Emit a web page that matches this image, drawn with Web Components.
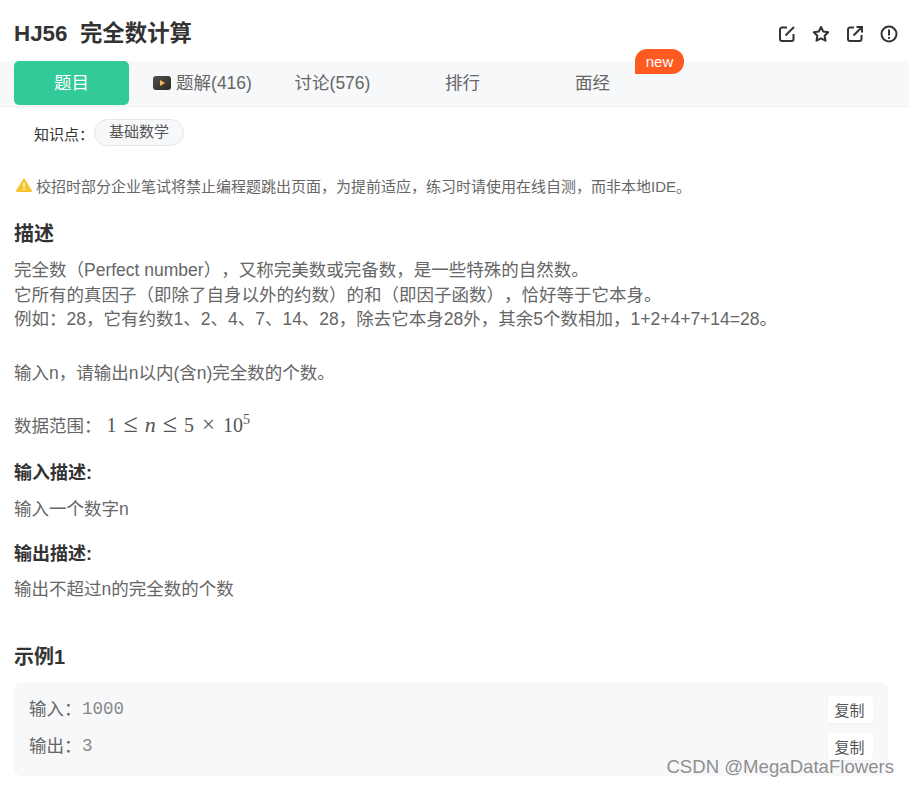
<!DOCTYPE html>
<html lang="zh">
<head>
<meta charset="utf-8">
<title>HJ56 完全数计算</title>
<style>
    html, body { margin: 0; padding: 0; background: #fff; }
    body { font-family: "Liberation Sans", "Noto Sans CJK SC", sans-serif; color: #333; position: relative; height: 787px; overflow: hidden; }
    .wide { text-spacing-trim: space-all; }
</style>
</head>
<body>
<problem-header>HJ56&nbsp;&nbsp;完全数计算</problem-header>
<tab-bar>
    <tab-item active>题目</tab-item>
    <tab-item video>题解(416)</tab-item>
    <tab-item>讨论(576)</tab-item>
    <tab-item>排行</tab-item>
    <tab-item badge="new">面经</tab-item>
</tab-bar>
<topic-row label="知识点：">基础数学</topic-row>
<notice-line>校招时部分企业笔试将禁止编程题跳出页面，为提前适应，练习时请使用在线自测，而非本地IDE。</notice-line>
<desc-section heading="描述" size="20" top="26" gap="12">
    <div>完全数（Perfect number<span class="wide">），</span>又称完美数或完备数，是一些特殊的自然数。</div>
    <div>它所有的真因子（即除了自身以外的约数）的和（即因子函数<span class="wide">），</span>恰好等于它本身。</div>
    <div>例如：28，它有约数1、2、4、7、14、28，除去它本身28外，其余5个数相加，1+2+4+7+14=28。</div>
    <div class="blank">&nbsp;</div>
    <div>输入n，请输出n以内(含n)完全数的个数。</div>
    <div class="blank">&nbsp;</div>
    <div class="range">数据范围： <math-range></math-range></div>
</desc-section>
<desc-section heading="输入描述:" size="18" top="25" gap="12">
    <div>输入一个数字n</div>
</desc-section>
<desc-section heading="输出描述:" size="18" top="20" gap="11">
    <div>输出不超过n的完全数的个数</div>
</desc-section>
<example-box heading="示例1" input="1000" output="3"></example-box>
<water-mark>CSDN @MegaDataFlowers</water-mark>

<script>
class ProblemHeader extends HTMLElement {
    constructor(){
        super();
        this.attachShadow({mode:'open'});
        this.shadowRoot.innerHTML = `
            <style>
                :host{
                    display: flex;
                    align-items: center;
                    justify-content: space-between;
                    height: 61px;
                    padding: 6px 10px 0 14px;
                    box-sizing: border-box;
                }
                h1{
                    margin: 0;
                    font-size: 22.400px;
                    line-height: 30px;
                    font-weight: 700;
                    color: #333;
                }
                .icons{
                    display: flex;
                    gap: 14px;
                }
                svg{
                    display: block;
                    width: 20px;
                    height: 20px;
                    fill: none;
                    stroke: #333;
                    stroke-width: 2;
                }
            </style>
            <h1><slot></slot></h1>
            <div class="icons">
                <svg viewBox="0 0 20 20"><path d="M10 3.500H5a2 2 0 0 0-2 2V15a2 2 0 0 0 2 2h9.500a2 2 0 0 0 2-2V10"/><path d="M8.500 11.500L17 3"/></svg>
                <svg viewBox="0 0 20 20"><path stroke-linejoin="round" d="M10 3l2.200 4.500 5 .7-3.600 3.500.9 5L10 14.300 5.500 16.700l.9-5L2.800 8.200l5-.7z"/></svg>
                <svg viewBox="0 0 20 20"><path d="M9 3.500H5a2 2 0 0 0-2 2V15a2 2 0 0 0 2 2h9.500a2 2 0 0 0 2-2v-4"/><path d="M8.500 11.500L16.500 3.500M11.500 3H17v5.500"/></svg>
                <svg viewBox="0 0 20 20"><circle cx="10" cy="10" r="7.500"/><path d="M10 5.500v6M10 13v1.800"/></svg>
            </div>
        `;
    }
}

class TabBar extends HTMLElement {
    constructor(){
        super();
        this.attachShadow({mode:'open'});
        this.shadowRoot.innerHTML = `
            <style>
                :host{
                    display: flex;
                    gap: 15px;
                    height: 45px;
                    padding-left: 14px;
                    background: #f7f8fa;
                    border-bottom: 1px solid #f0f1f3;
                }
            </style>
            <slot></slot>
        `;
    }
}

class TabItem extends HTMLElement {
    constructor(){
        super();
        this.attachShadow({mode:'open'});
    }

    connectedCallback(){
        let video = this.hasAttribute('video') ? `
            <svg viewBox="0 0 18 14">
                <defs><linearGradient id="g" x1="0" y1="0" x2="1" y2="1"><stop offset="0" stop-color="#55504b"/><stop offset="1" stop-color="#2b2722"/></linearGradient></defs>
                <rect width="18" height="14" rx="3" fill="url(#g)"/>
                <path d="M7 4l5 3-5 3z" fill="#f0b95c"/>
            </svg>
        ` : '';
        let badge = this.getAttribute('badge');
        this.shadowRoot.innerHTML = `
            <style>
                :host{
                    display: flex;
                    align-items: center;
                    justify-content: center;
                    gap: 5px;
                    position: relative;
                    box-sizing: border-box;
                    width: 115px;
                    height: 44px;
                    padding: 0 0 3px 2px;
                    font-size: 17.500px;
                    color: #666;
                    border-radius: 5px;
                }
                :host([active]){
                    padding-left: 0;
                    background: #32ca99;
                    color: #fff;
                }
                svg{
                    width: 18px;
                    height: 14px;
                    flex: none;
                    margin-top: 3px;
                }
                .badge{
                    position: absolute;
                    left: 101px;
                    top: -12px;
                    width: 49px;
                    height: 25px;
                    line-height: 25px;
                    text-align: center;
                    font-size: 15px;
                    color: #fff;
                    background: #ff5a1f;
                    border-radius: 12px 12px 12px 0;
                }
            </style>
            ${video}<slot></slot>
            ${badge ? `<span class="badge">${badge}</span>` : ''}
        `;
    }
}

class TopicRow extends HTMLElement {
    constructor(){
        super();
        this.attachShadow({mode:'open'});
    }

    connectedCallback(){
        this.shadowRoot.innerHTML = `
            <style>
                :host{
                    display: flex;
                    align-items: center;
                    height: 28px;
                    margin-top: 11px;
                    padding-left: 34px;
                    font-size: 15px;
                    color: #333;
                }
                .label{
                    width: 60px;
                    position: relative;
                    top: 1px;
                    white-space: nowrap;
                }
                .chip{
                    box-sizing: border-box;
                    width: 90px;
                    height: 27px;
                    line-height: 23px;
                    text-align: center;
                    color: #555;
                    background: #f7f8fa;
                    border: 1px solid #e6e6e8;
                    border-radius: 14px;
                }
            </style>
            <span class="label">${this.getAttribute('label')}</span>
            <span class="chip"><slot></slot></span>
        `;
    }
}

class NoticeLine extends HTMLElement {
    constructor(){
        super();
        this.attachShadow({mode:'open'});
        this.shadowRoot.innerHTML = `
            <style>
                :host{
                    display: flex;
                    align-items: center;
                    gap: 4px;
                    height: 22px;
                    margin-top: 28px;
                    padding-left: 16px;
                    font-size: 15px;
                    color: #666;
                    white-space: nowrap;
                }
                svg{
                    width: 16px;
                    height: 14px;
                    flex: none;
                }
            </style>
            <svg viewBox="0 0 16 14"><path d="M8 .5a1 1 0 0 1 .9.500l7 11.500a1 1 0 0 1-.9 1.500H1a1 1 0 0 1-.9-1.500L7.100 1A1 1 0 0 1 8 .5z" fill="#f5c431"/><path d="M8 4.500v4.500M8 10.300v1.500" stroke="#fff" stroke-width="1.500"/></svg>
            <slot></slot>
        `;
    }
}

class MathRange extends HTMLElement {
    constructor(){
        super();
        this.attachShadow({mode:'open'});
        this.shadowRoot.innerHTML = `
            <style>
                :host{
                    display: inline-flex;
                    align-items: baseline;
                    gap: 7px;
                    font-family: "Liberation Serif", serif;
                    font-size: 20px;
                    color: #555;
                }
                i{ font-style: italic; font-size: 22px; }
                .op{ font-size: 26px; line-height: 0; }
                .times{ font-size: 23px; line-height: 0; margin: 0 1px; }
                sup{
                    font-size: 14px;
                    line-height: 0;
                    vertical-align: 8px;
                }
            </style>
            <span>1</span><span class="op">≤</span><i>n</i><span class="op">≤</span><span>5</span><span class="times">×</span><span>10<sup>5</sup></span>
        `;
    }
}

class DescSection extends HTMLElement {
    constructor(){
        super();
        this.attachShadow({mode:'open'});
    }

    connectedCallback(){
        this.shadowRoot.innerHTML = `
            <style>
                :host{
                    display: block;
                    margin-top: ${this.getAttribute('top')}px;
                    padding-left: 14px;
                }
                h3{
                    margin: 0 0 ${this.getAttribute('gap')}px;
                    font-size: ${this.getAttribute('size')}px;
                    line-height: 24px;
                    font-weight: 700;
                    color: #333;
                }
                .body{
                    font-size: 17.500px;
                    line-height: 24.500px;
                    color: #666;
                    white-space: nowrap;
                }
                ::slotted(.blank){
                    height: 29px;
                }
                ::slotted(.range){
                    height: 22px;
                    line-height: 22px;
                }
            </style>
            <h3>${this.getAttribute('heading')}</h3>
            <div class="body"><slot></slot></div>
        `;
    }
}

class ExampleBox extends HTMLElement {
    constructor(){
        super();
        this.attachShadow({mode:'open'});
    }

    row(label, value){
        return `
            <div class="row">
                <span class="label">${label}：</span><code>${value}</code>
                <button>复制</button>
            </div>
        `;
    }

    connectedCallback(){
        this.shadowRoot.innerHTML = `
            <style>
                :host{
                    display: block;
                    margin: 44px 21px 0 14px;
                }
                h3{
                    margin: 0 0 13px;
                    font-size: 20px;
                    line-height: 24px;
                    font-weight: 700;
                    color: #333;
                }
                .box{
                    display: flex;
                    flex-direction: column;
                    gap: 10px;
                    height: 94px;
                    box-sizing: border-box;
                    padding: 14px 15px 0;
                    background: #f7f8fa;
                    border-radius: 8px;
                }
                .row{
                    display: flex;
                    align-items: center;
                    height: 27px;
                    font-size: 17.500px;
                    line-height: 25px;
                    color: #666;
                }
                .label{
                    width: 53px;
                    white-space: nowrap;
                }
                .label, code{
                    margin-bottom: 1px;
                }
                code{
                    font-family: "Liberation Mono", monospace;
                    font-size: 17.500px;
                    color: #888;
                }
                button{
                    margin-left: auto;
                    width: 45px;
                    height: 27px;
                    padding: 0 2px 0 0;
                    border: 0;
                    border-radius: 4px;
                    background: #fff;
                    font: 15px "Liberation Sans", "Noto Sans CJK SC", sans-serif;
                    color: #555;
                    box-shadow: 0 1px 3px rgba(0,0,0,.04);
                }
            </style>
            <h3>${this.getAttribute('heading')}</h3>
            <div class="box">
                ${this.row('输入', this.getAttribute('input'))}
                ${this.row('输出', this.getAttribute('output'))}
            </div>
        `;
    }
}

class WaterMark extends HTMLElement {
    constructor(){
        super();
        this.attachShadow({mode:'open'});
        this.shadowRoot.innerHTML = `
            <style>
                :host{
                    position: absolute;
                    right: 15px;
                    top: 756px;
                    font-size: 18.600px;
                    line-height: 22px;
                    color: #8e8e8e;
                    text-shadow: 0 0 1px rgba(255,255,255,.8);
                    white-space: nowrap;
                }
            </style>
            <slot></slot>
        `;
    }
}

customElements.define('problem-header', ProblemHeader);
customElements.define('tab-bar', TabBar);
customElements.define('tab-item', TabItem);
customElements.define('topic-row', TopicRow);
customElements.define('notice-line', NoticeLine);
customElements.define('math-range', MathRange);
customElements.define('desc-section', DescSection);
customElements.define('example-box', ExampleBox);
customElements.define('water-mark', WaterMark);
</script>
</body>
</html>
